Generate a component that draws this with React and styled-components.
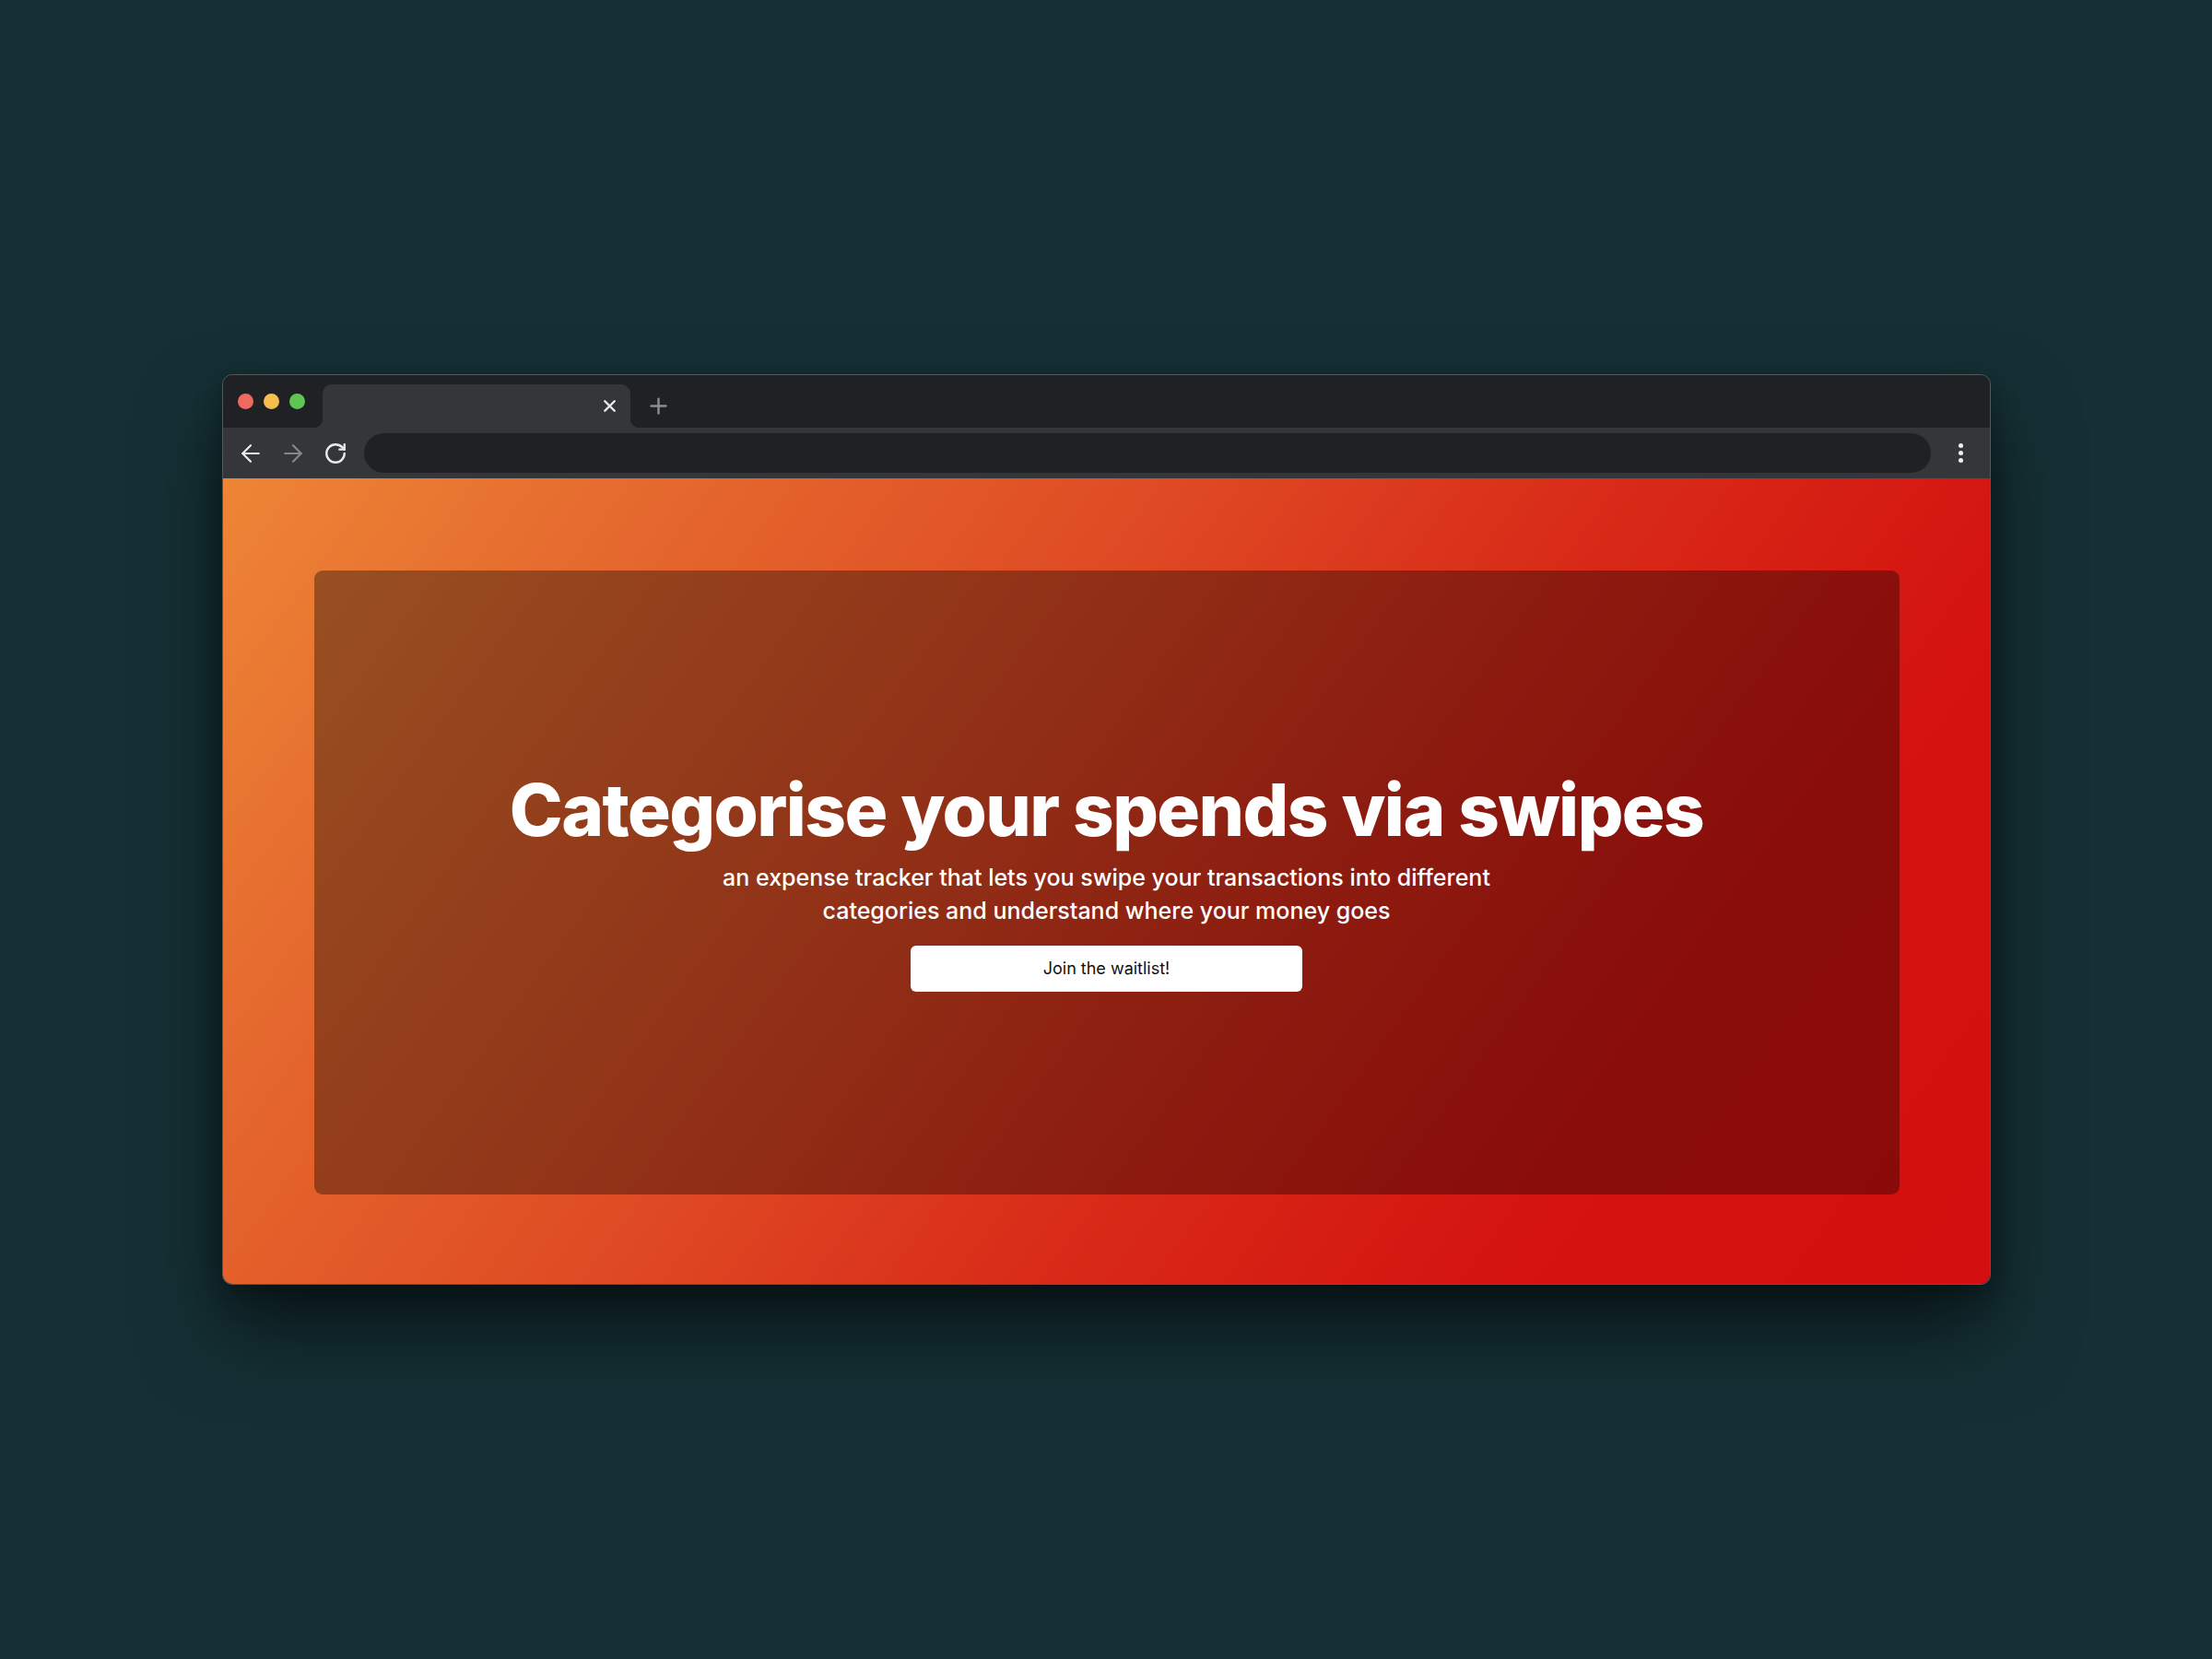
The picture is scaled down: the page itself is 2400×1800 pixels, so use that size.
import React from 'react'
import styled, { createGlobalStyle } from 'styled-components'
import { ArrowLeft, ArrowRight, RotateCw, X, Plus } from 'lucide-react'

const GlobalStyle = createGlobalStyle`
  html, body {
    margin: 0;
    padding: 0;
    background: #153035;
  }
  body {
    font-family: Inter, "Noto Sans", sans-serif;
  }
`

const Page = styled.div`
  width: 2400px;
  height: 1800px;
  display: flex;
  align-items: center;
  justify-content: center;
  background: #153035;
`

const Window = styled.div`
  width: 1919px;
  height: 988px;
  box-sizing: border-box;
  display: flex;
  flex-direction: column;
  border: 1px solid #55585b;
  border-radius: 11px;
  overflow: hidden;
  box-shadow: 0 50px 90px rgba(0, 0, 0, 0.55), 0 10px 30px rgba(0, 0, 0, 0.3);
`

const TabBar = styled.div`
  height: 57px;
  flex-shrink: 0;
  display: flex;
  align-items: flex-end;
  background: #202124;
  padding-left: 16px;
`

const Lights = styled.div`
  display: flex;
  gap: 11px;
  align-self: center;
  margin-right: 19px;
`

const Light = styled.span`
  width: 17px;
  height: 17px;
  border-radius: 50%;
  background: ${props => props.color};
`

const Tab = styled.div`
  position: relative;
  width: 334px;
  height: 47px;
  box-sizing: border-box;
  background: #35363a;
  border-radius: 10px 10px 0 0;
  display: flex;
  align-items: center;
  justify-content: flex-end;
  padding-right: 12px;
  color: #e8eaed;

  &::before,
  &::after {
    content: '';
    position: absolute;
    bottom: 0;
    width: 10px;
    height: 10px;
  }
  &::before {
    left: -10px;
    background: radial-gradient(circle at 0 0, transparent 10px, #35363a 10.5px);
  }
  &::after {
    right: -10px;
    background: radial-gradient(circle at 100% 0, transparent 10px, #35363a 10.5px);
  }
`

const NewTab = styled.div`
  display: flex;
  align-items: center;
  height: 47px;
  margin-left: 17px;
  color: #8e8f92;
`

const Toolbar = styled.div`
  height: 55px;
  flex-shrink: 0;
  display: flex;
  align-items: center;
  background: #35363a;
  padding: 0 29px 0 15px;
`

const NavButton = styled.div`
  width: 30px;
  height: 30px;
  display: flex;
  align-items: center;
  justify-content: center;
  margin-right: 16px;
  color: ${props => (props.disabled ? '#86878a' : '#e8eaed')};
`

const Address = styled.div`
  flex: 1;
  height: 43px;
  border-radius: 22px;
  background: #202124;
`

const Dots = styled.div`
  display: flex;
  flex-direction: column;
  gap: 3px;
  margin-left: 30px;
  span {
    width: 5px;
    height: 5px;
    border-radius: 50%;
    background: #f1f3f4;
  }
`

const Viewport = styled.main`
  flex: 1;
  padding: 100px 98px 97px 99px;
  background: linear-gradient(
    126deg,
    #ee8536 0%,
    #e56a2e 18%,
    #df4b24 40%,
    #d82a18 60%,
    #d41410 78%,
    #d40f0f 100%
  );
  display: flex;
`

const Card = styled.section`
  flex: 1;
  border-radius: 9px;
  background: rgba(0, 0, 0, 0.35);
  display: flex;
  flex-direction: column;
  align-items: center;
  justify-content: center;
  color: #fff;
  text-align: center;
`

const Title = styled.h1`
  margin: 0;
  font-family: Inter, sans-serif;
  font-size: 78px;
  line-height: 1;
  font-weight: 800;
  letter-spacing: -0.02em;
`

const Subtitle = styled.p`
  margin: 16px 0 0;
  max-width: 880px;
  font-family: Inter, sans-serif;
  font-size: 25px;
  line-height: 36px;
  font-weight: 500;
`

const WaitlistButton = styled.button`
  margin-top: 20px;
  width: 425px;
  height: 50px;
  border: none;
  border-radius: 6px;
  background: #fff;
  color: #111;
  font-family: Inter, sans-serif;
  font-size: 18px;
  cursor: pointer;
`

export default function App() {
  return (
    <>
      <GlobalStyle />
      <Page>
        <Window>
          <TabBar>
            <Lights>
              <Light color="#ee6a5f" />
              <Light color="#f5be4f" />
              <Light color="#61c554" />
            </Lights>
            <Tab>
              <X size={21} strokeWidth={2.4} absoluteStrokeWidth />
            </Tab>
            <NewTab>
              <Plus size={27} strokeWidth={2.4} absoluteStrokeWidth />
            </NewTab>
          </TabBar>
          <Toolbar>
            <NavButton>
              <ArrowLeft size={30} strokeWidth={2.2} absoluteStrokeWidth />
            </NavButton>
            <NavButton disabled>
              <ArrowRight size={30} strokeWidth={2.2} absoluteStrokeWidth />
            </NavButton>
            <NavButton>
              <RotateCw size={26} strokeWidth={2.4} absoluteStrokeWidth />
            </NavButton>
            <Address />
            <Dots>
              <span />
              <span />
              <span />
            </Dots>
          </Toolbar>
          <Viewport>
            <Card>
              <Title>Categorise your spends via swipes</Title>
              <Subtitle>
                an expense tracker that lets you swipe your transactions into different
                categories and understand where your money goes
              </Subtitle>
              <WaitlistButton>Join the waitlist!</WaitlistButton>
            </Card>
          </Viewport>
        </Window>
      </Page>
    </>
  )
}
